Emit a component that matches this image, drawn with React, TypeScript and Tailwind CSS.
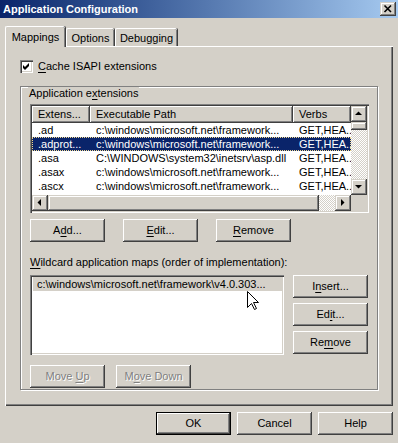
import type { ReactNode } from "react";

// classic win2k bevels
const raised =
  "shadow-[inset_-1px_-1px_0_#404040,inset_1px_1px_0_#ffffff,inset_-2px_-2px_0_#808080]";
const sbButton =
  "shadow-[inset_-1px_-1px_0_#404040,inset_1px_1px_0_#d4d0c8,inset_-2px_-2px_0_#808080,inset_2px_2px_0_#ffffff]";
const sunken =
  "shadow-[inset_1px_1px_0_#808080,inset_2px_2px_0_#404040,inset_-1px_-1px_0_#ffffff,inset_-2px_-2px_0_#d4d0c8]";
const dither =
  "bg-[repeating-conic-gradient(#ffffff_0_25%,#d4d0c8_0_50%)] bg-[length:2px_2px]";

function U({ children }: { children: ReactNode }) {
  return <span className="underline decoration-1 underline-offset-[2px]">{children}</span>;
}

function Btn({
  children,
  disabled,
  def,
}: {
  children: ReactNode;
  disabled?: boolean;
  def?: boolean;
}) {
  return (
    <div
      className={`w-[75px] h-[23px] shrink-0 flex items-center justify-center bg-[#d4d0c8] ${
        def ? "border border-black" : ""
      } ${raised} ${
        disabled ? "text-[#808080] [text-shadow:1px_1px_0_#ffffff]" : "text-black"
      }`}
    >
      <span className="whitespace-pre">{children}</span>
    </div>
  );
}

function Arrow({ dir }: { dir: "up" | "down" | "left" | "right" }) {
  const pts = {
    up: "4,9 11,9 7.5,5.5",
    down: "4,6 11,6 7.5,9.5",
    left: "9,4 9,11 5.5,7.5",
    right: "6,4 6,11 9.5,7.5",
  }[dir];
  return (
    <div className={`w-[16px] h-[16px] shrink-0 bg-[#d4d0c8] ${sbButton}`}>
      <svg width="16" height="16" viewBox="0 0 16 16">
        <polygon points={pts} fill="#000" />
      </svg>
    </div>
  );
}

const rows = [
  [".ad", "c:\\windows\\microsoft.net\\framework...", "GET,HEA.."],
  [".adprot...", "c:\\windows\\microsoft.net\\framework...", "GET,HEA.."],
  [".asa", "C:\\WINDOWS\\system32\\inetsrv\\asp.dll", "GET,HEA.."],
  [".asax", "c:\\windows\\microsoft.net\\framework...", "GET,HEA.."],
  [".ascx", "c:\\windows\\microsoft.net\\framework...", "GET,HEA.."],
];

export default function App() {
  return (
    <div className="w-[398px] h-[443px] overflow-hidden bg-[#d4d0c8] text-[11px] leading-[13px] text-black font-['Liberation_Sans',Arial,sans-serif]">
      {/* title bar */}
      <div className="h-[18px] flex items-center justify-between pl-[3px] pr-[2px] bg-linear-to-r from-[#0a246a] to-[#a6caf0]">
        <span className="text-white font-bold">Application Configuration</span>
        <div className={`w-[16px] h-[14px] bg-[#d4d0c8] ${sbButton}`}>
          <svg width="16" height="14" viewBox="0 0 16 14">
            <path d="M4.5 3.5 L11 10 M11 3.5 L4.5 10" stroke="#000" strokeWidth="1.6" />
          </svg>
        </div>
      </div>

      {/* tabs */}
      <div className="mt-[8px] ml-[5px] h-[20px] flex items-end relative z-10">
        <div className="w-[60px] h-[21px] -mb-[1px] bg-[#d4d0c8] rounded-t-[2px] border-t border-l border-white shadow-[inset_-1px_0_0_#808080,1px_0_0_#404040] flex items-start justify-center pt-[4px]">
          Mappings
        </div>
        <div className="w-[48px] h-[18px] ml-[1px] rounded-t-[2px] border-t border-l border-white shadow-[inset_-1px_0_0_#808080,1px_0_0_#404040] flex items-start justify-center pt-[3px]">
          Options
        </div>
        <div className="w-[62px] h-[18px] ml-[1px] rounded-t-[2px] border-t border-l border-white shadow-[inset_-1px_0_0_#808080,1px_0_0_#404040] flex items-start justify-center pt-[3px]">
          Debugging
        </div>
      </div>

      {/* tab panel */}
      <div className="mx-[5px] h-[360px] shadow-[inset_1px_1px_0_#ffffff,inset_-1px_-1px_0_#404040,inset_-2px_-2px_0_#808080] pt-[13px] pl-[15px]">
        <div className="h-[15px] flex items-center">
          <div className={`w-[13px] h-[13px] bg-white ${sunken}`}>
            <svg width="13" height="13" viewBox="0 0 13 13">
              <path d="M3 5 L5 7 L9 3 L9 6 L5 10 L3 8 Z" fill="#000" />
            </svg>
          </div>
          <span className="ml-[5px]">
            <U>C</U>ache ISAPI extensions
          </span>
        </div>

        {/* group box */}
        <div className="mt-[12px] w-[358px] h-[304px] border border-[#808080] shadow-[inset_1px_1px_0_#ffffff,1px_1px_0_#ffffff] pl-[9px]">
          <div className="-mt-[7px] -ml-[2px] inline-block bg-[#d4d0c8] px-[1px]">
            Application e<U>x</U>tensions
          </div>

          {/* list view */}
          <div className={`mt-[4px] w-[339px] h-[109px] bg-white p-[2px] ${sunken}`}>
            <div className="flex h-[89px]">
              <div className="w-[319px] overflow-hidden">
                <div className="flex h-[17px]">
                  <div className={`w-[58px] bg-[#d4d0c8] ${raised} pl-[6px] pt-[2px]`}>Extens...</div>
                  <div className={`w-[203px] bg-[#d4d0c8] ${raised} pl-[6px] pt-[2px]`}>Executable Path</div>
                  <div className={`w-[58px] bg-[#d4d0c8] ${raised} pl-[6px] pt-[2px]`}>Verbs</div>
                </div>
                {rows.map((r, i) => (
                  <div
                    key={i}
                    className={`flex h-[14px] items-center whitespace-nowrap ${
                      i === 1
                        ? "bg-[#0a246a] text-white outline-1 outline-dotted outline-[#f0d890] -outline-offset-1"
                        : ""
                    }`}
                  >
                    <div className="w-[58px] pl-[6px] overflow-hidden">{r[0]}</div>
                    <div className="w-[203px] pl-[6px] overflow-hidden">{r[1]}</div>
                    <div className="w-[58px] pl-[6px] overflow-hidden">{r[2]}</div>
                  </div>
                ))}
              </div>
              <div className="w-[16px] flex flex-col">
                <Arrow dir="up" />
                <div className={`h-[8px] bg-[#d4d0c8] ${sbButton}`} />
                <div className={`flex-1 ${dither}`} />
                <Arrow dir="down" />
              </div>
            </div>
            <div className="flex h-[16px]">
              <Arrow dir="left" />
              <div className={`w-[271px] bg-[#d4d0c8] ${sbButton}`} />
              <div className={`w-[16px] ${dither}`} />
              <Arrow dir="right" />
              <div className="w-[16px] bg-[#d4d0c8]" />
            </div>
          </div>

          <div className="mt-[6px] flex gap-[18px]">
            <Btn>
              A<U>d</U>d...
            </Btn>
            <Btn>
              <U>E</U>dit...
            </Btn>
            <Btn>
              <U>R</U>emove
            </Btn>
          </div>

          <div className="mt-[14px]">
            <U>W</U>ildcard application maps (order of implementation):
          </div>

          <div className="mt-[6px] flex">
            <div className={`relative w-[254px] h-[80px] bg-white p-[2px] ${sunken}`}>
              <div className="h-[14px] ml-[1px] pl-[4px] flex items-center bg-[#d4d0c8] whitespace-nowrap">
                c:\windows\microsoft.net\framework\v4.0.303...
              </div>
              <svg
                className="absolute left-[217px] top-[16px]"
                width="13"
                height="20"
                viewBox="0 0 13 20"
              >
                <path
                  d="M0.5 0.5 L0.5 16.5 L4.5 12.5 L7.5 18.5 L9.5 17.5 L6.5 11.5 L11.5 11.5 Z"
                  fill="#fff"
                  stroke="#000"
                  strokeWidth="1"
                />
              </svg>
            </div>
            <div className="ml-[9px] flex flex-col gap-[5px]">
              <Btn>
                I<U>n</U>sert...
              </Btn>
              <Btn>
                Ed<U>i</U>t...
              </Btn>
              <Btn>
                Re<U>m</U>ove
              </Btn>
            </div>
          </div>

          <div className="mt-[10px] flex gap-[11px]">
            <Btn disabled>
              Move <U>U</U>p
            </Btn>
            <Btn disabled>
              M<U>o</U>ve Down
            </Btn>
          </div>
        </div>
      </div>

      {/* dialog buttons */}
      <div className="mt-[6px] pr-[5px] flex justify-end gap-[6px]">
        <Btn def>OK</Btn>
        <Btn>Cancel</Btn>
        <Btn>Help</Btn>
      </div>
    </div>
  );
}
